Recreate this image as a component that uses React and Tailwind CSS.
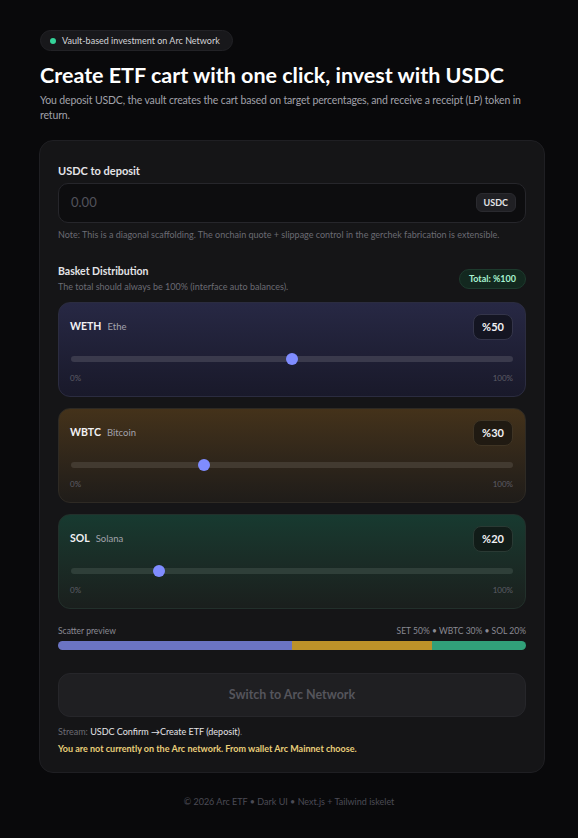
import React from 'react';

const assets = [
  {
    symbol: 'WETH',
    name: 'Ethe',
    pct: 50,
    card: 'bg-gradient-to-b from-[#272844] to-[#19192a] border-[#2b2c40]',
    box: 'bg-[#141522] border-[#34354a]',
    track: 'bg-[#3a3a4c]',
  },
  {
    symbol: 'WBTC',
    name: 'Bitcoin',
    pct: 30,
    card: 'bg-gradient-to-b from-[#44321a] to-[#1f1c19] border-[#2e2a24]',
    box: 'bg-[#201a12] border-[#3f3424]',
    track: 'bg-[#423a30]',
  },
  {
    symbol: 'SOL',
    name: 'Solana',
    pct: 20,
    card: 'bg-gradient-to-b from-[#173a30] to-[#1a1f1d] border-[#22302b]',
    box: 'bg-[#111c18] border-[#2a3a34]',
    track: 'bg-[#2f3f39]',
  },
];

function AssetCard({ asset }) {
  return (
    <div className={`rounded-[12px] border pl-[11px] pr-3 pt-[11px] pb-[12px] ${asset.card}`}>
      <div className="flex items-center justify-between">
        <div className="flex items-baseline gap-[6px]">
          <span className="text-[10.5px] font-bold text-[#f1f1f4]">{asset.symbol}</span>
          <span className="text-[9.5px] text-[#a3a3ad]">{asset.name}</span>
        </div>
        <div className={`h-[26px] w-[40px] rounded-[8px] border flex items-center justify-center text-[11px] font-bold text-[#f1f1f4] ${asset.box}`}>
          %{asset.pct}
        </div>
      </div>
      <div className="relative mt-[13px] ml-px h-[12px] flex items-center">
        <div className={`h-[6px] w-full rounded-full ${asset.track}`} />
        <div
          className="absolute top-0 h-[12px] w-[12px] -ml-[6px] rounded-full bg-[#7f8cff]"
          style={{ left: `${asset.pct}%` }}
        />
      </div>
      <div className="mt-[7px] flex justify-between text-[8px] leading-[12px] text-[#5d5d66]">
        <span>0%</span>
        <span>100%</span>
      </div>
    </div>
  );
}

export default function App() {
  return (
    <div
      className="min-h-[838px] bg-[#09090b] text-white"
      style={{ fontFamily: 'Lato, sans-serif' }}
    >
      <div className="ml-[39px] w-[506px] pt-[30px]">
        <div className="flex">
          <div className="flex items-center gap-[6px] h-[21px] ml-px pl-[9px] pr-[12px] rounded-full bg-[#18181b] border border-[#222226] text-[9px] text-[#d4d4d8]">
            <span className="h-[6px] w-[6px] rounded-full bg-[#34d399]" />
            Vault-based investment on Arc Network
          </div>
        </div>
        <h1 className="mt-[10px] ml-px text-[21.5px] leading-[28px] font-bold text-white">
          Create ETF cart with one click, invest with USDC
        </h1>
        <p className="mt-[4px] ml-px text-[10.5px] leading-[15px] tracking-[-0.15px] text-[#a1a1aa]">
          You deposit USDC, the vault creates the cart based on target percentages, and receive a receipt (LP) token in return.
        </p>

        <div className="mt-[17px] rounded-[14px] bg-[#151517] border border-[#1f1f23] px-[18px] pt-[22px] pb-[17px]">
          <div className="text-[11px] font-bold text-[#e4e4e7]">USDC to deposit</div>
          <div className="mt-[3px] h-[40px] rounded-[10px] border border-[#26262b] bg-[#0d0d0f] flex items-center justify-between pl-[12px] pr-[9px]">
            <span className="text-[13px] text-[#52525b]">0.00</span>
            <span className="h-[19px] px-[7px] rounded-[6px] bg-[#202024] border border-[#2a2a2f] flex items-center text-[9px] font-bold text-[#e4e4e7]">
              USDC
            </span>
          </div>
          <p className="mt-[5px] text-[9px] text-[#6b6b73]">
            Note: This is a diagonal scaffolding. The onchain quote + slippage control in the gerchek fabrication is extensible.
          </p>

          <div className="mt-[23px] flex items-center justify-between">
            <div>
              <div className="text-[10.5px] font-bold text-[#e4e4e7]">Basket Distribution</div>
              <div className="text-[9px] text-[#6b6b73]">The total should always be 100% (interface auto balances).</div>
            </div>
            <span className="h-[20px] px-[9px] rounded-full bg-[#13281f] border border-[#1d3a2d] flex items-center text-[9px] font-bold text-[#a7f3d0]">
              Total: %100
            </span>
          </div>

          <div className="mt-[9px] flex flex-col gap-[11px]">
            {assets.map((a) => (
              <AssetCard key={a.symbol} asset={a} />
            ))}
          </div>

          <div className="mt-[16px] flex justify-between text-[8.5px] text-[#8a8a93]">
            <span>Scatter preview</span>
            <span>SET 50% • WBTC 30% • SOL 20%</span>
          </div>
          <div className="mt-[3px] h-[9px] rounded-full overflow-hidden flex">
            <div className="h-full bg-[#6b74c4]" style={{ width: '50%' }} />
            <div className="h-full bg-[#bd9229]" style={{ width: '30%' }} />
            <div className="h-full bg-[#31a079]" style={{ width: '20%' }} />
          </div>

          <button className="mt-[23px] w-full h-[44px] rounded-[12px] bg-[#1f1f22] border border-[#26262a] text-[12.5px] font-bold text-[#55555c]">
            Switch to Arc Network
          </button>

          <p className="mt-[8px] text-[9px] text-[#6b6b73]">
            Stream: <span className="text-[#e4e4e7]">USDC Confirm →Create ETF (deposit)</span>.
          </p>
          <p className="mt-[3px] text-[9px] font-bold text-[#e9cf7a]">
            You are not currently on the Arc network. From wallet Arc Mainnet choose.
          </p>
        </div>
      </div>

      <div className="pt-[22px] text-center text-[9px] text-[#4b4b55]">
        © 2026 Arc ETF • Dark UI • Next.js + Tailwind iskelet
      </div>
    </div>
  );
}
